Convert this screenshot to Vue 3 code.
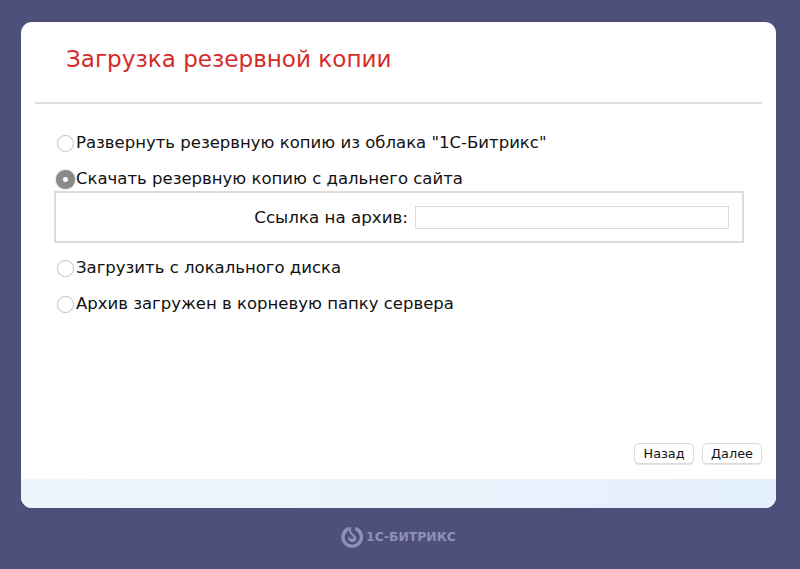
<script setup>
const options = [
  { id: 1, label: 'Развернуть резервную копию из облака "1С-Битрикс"' },
  { id: 2, label: 'Скачать резервную копию с дальнего сайта', selected: true, link: true },
  { id: 3, label: 'Загрузить с локального диска' },
  { id: 4, label: 'Архив загружен в корневую папку сервера' }
]
</script>

<template>
  <div class="page">
    <div class="card">
      <div class="main">
        <h1 class="title">Загрузка резервной копии</h1>
        <div class="rule"></div>
        <div class="options">
          <div v-for="o in options" :key="o.id" class="option">
            <label class="row">
              <span class="radio" :class="{ on: o.selected }"></span>
              <span>{{ o.label }}</span>
            </label>
            <div v-if="o.link" class="linkbox">
              <span class="linklabel">Ссылка на архив:</span>
              <span class="input"></span>
            </div>
          </div>
        </div>
        <div class="actions">
          <button class="btn back">Назад</button>
          <button class="btn next">Далее</button>
        </div>
      </div>
      <div class="strip"></div>
    </div>
    <div class="brand">
      <svg class="logo" width="22" height="24" viewBox="0 0 22 24">
        <path d="M8 3.4 A9.2 9.2 0 1 0 14.4 3.4" fill="none" stroke="#8d92b4" stroke-width="3.4" />
        <path d="M10.5 1.5 C9.5 5 10 7.5 12 8.8 C15 10.5 16 13 14.6 15.4 C13 17.6 9.6 17.4 8 15.4 C7 14 7 12.4 7.6 11 C8.6 13.4 10.4 14.2 11.8 13.4 C12.8 12.6 12.4 11.4 11 10.4 C8.4 8.6 7.6 6 8.6 2.4 Z" fill="#8d92b4" />
      </svg>
      <span class="brandtext">1С-БИТРИКС</span>
    </div>
  </div>
</template>

<style scoped>
.page {
  box-sizing: border-box;
  width: 800px;
  height: 569px;
  background: #4e507c;
  padding: 22px 24px 0 21px;
  font-family: "DejaVu Sans", Verdana, sans-serif;
  color: #111;
}
.card {
  height: 486px;
  border-radius: 11px;
  background: #fff;
  display: flex;
  flex-direction: column;
  overflow: hidden;
}
.main {
  flex: 1;
  display: flex;
  flex-direction: column;
  padding: 0 14px 0 14px;
}
.title {
  margin: 0;
  padding: 21px 0 0 31px;
  height: 60px;
  box-sizing: border-box;
  font-size: 23.1px;
  line-height: 32px;
  font-weight: 400;
  color: #d52b2b;
}
.rule {
  margin-top: 20px;
  height: 2px;
  background: #dedede;
}
.options {
  padding-top: 29px;
  display: flex;
  flex-direction: column;
  gap: 16px;
}
.row {
  display: flex;
  align-items: center;
  height: 20px;
  font-size: 16.5px;
  line-height: 20px;
  padding-left: 22px;
}
.radio {
  width: 17px;
  height: 17px;
  box-sizing: border-box;
  border: 1px solid #c9c9c9;
  border-radius: 50%;
  background: #fff;
  margin-right: 2px;
  flex: none;
  box-shadow: 0 0 1px #ddd;
}
.radio.on {
  width: 19px;
  height: 19px;
  margin: 0 1px 0 -1px;
  border: 7px solid #8a8a8a;
  box-shadow: 0 0 2px #999;
}
.linkbox {
  box-sizing: border-box;
  margin: 2px 0 -1px 19px;
  width: 690px;
  height: 52px;
  border: 2px solid #dcdcdc;
  display: flex;
  align-items: center;
  justify-content: flex-end;
  padding-right: 13px;
}
.linklabel {
  font-size: 16.7px;
  margin-right: 7px;
}
.input {
  box-sizing: border-box;
  width: 314px;
  height: 23px;
  border: 1px solid #dcdcdc;
  box-shadow: inset 0 0 1px #e6e6e6;
  background: #fff;
}
.actions {
  margin-top: auto;
  display: flex;
  justify-content: flex-end;
  gap: 8px;
  padding-bottom: 15px;
}
.btn {
  box-sizing: border-box;
  height: 21px;
  padding: 0;
  border: 1px solid #dcdcdc;
  border-radius: 5px;
  background: #fff;
  font-family: "DejaVu Sans", Verdana, sans-serif;
  font-size: 12.8px;
  color: #111;
  box-shadow: 0 1px 1px #e4e4e4;
}
.back { width: 60px; }
.next { width: 60px; }
.strip {
  height: 29px;
  background: linear-gradient(90deg, #eff5fc, #e4f0fb);
}
.brand {
  display: flex;
  align-items: center;
  justify-content: center;
  gap: 3px;
  margin-top: 16px;
  height: 25px;
}
.brandtext {
  font-family: "DejaVu Sans", Arial, sans-serif;
  font-size: 12.4px;
  font-weight: 700;
  color: #8d92b4;
}
</style>
